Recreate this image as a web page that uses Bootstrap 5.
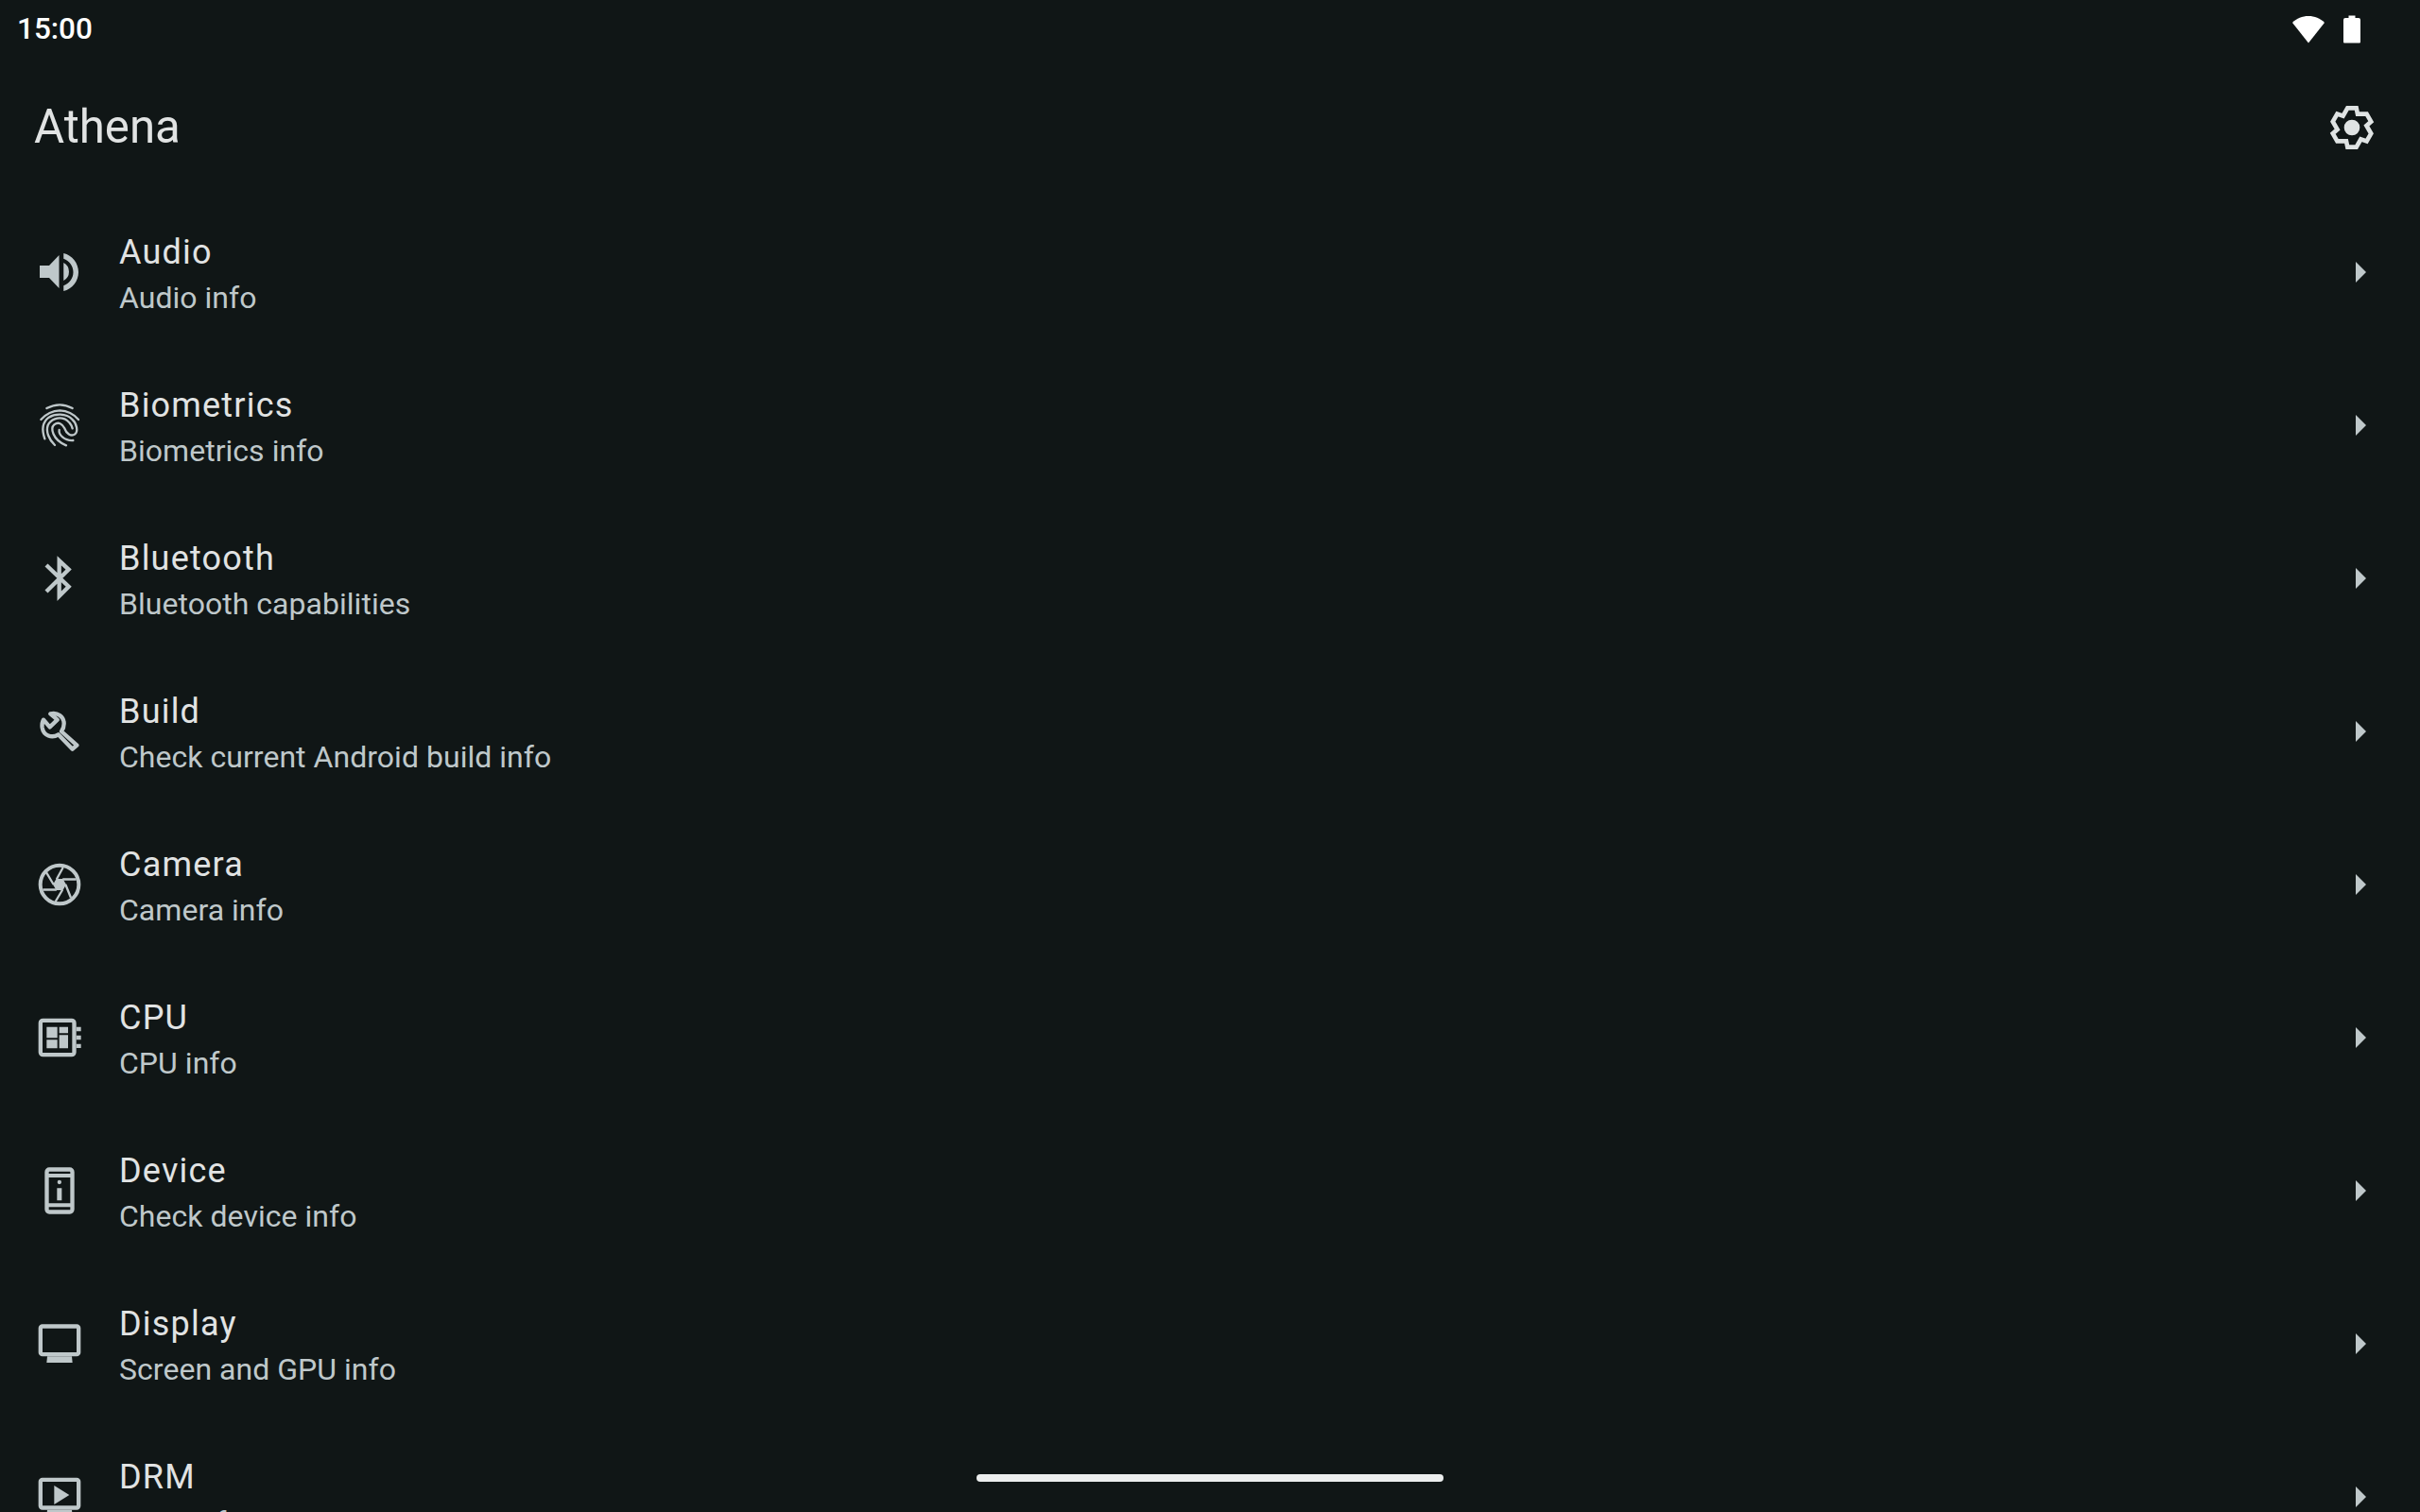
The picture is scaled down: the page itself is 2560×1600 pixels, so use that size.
<!DOCTYPE html>
<html lang="en">
<head>
  <meta charset="UTF-8">
  <title>Athena</title>
  <link href="https://cdn.jsdelivr.net/npm/bootstrap@5.3.0/dist/css/bootstrap.min.css" rel="stylesheet">
  <style>
    html, body { height: 100%; }
    body { background: #101616; font-family: Roboto, "Liberation Sans", sans-serif; overflow: hidden; }
    .screen { height: 1600px; overflow: hidden; }
    .status-row { height: 60px; padding: 2px 63px 0 18px; color: #fff; font-size: 31.5px; font-weight: 500; }
    .status-row svg { display: block; }
    .status-icons { gap: 20px; }
    .app-bar { height: 147px; padding: 3px 42px 0 36px; }
    .app-title { color: #e1e3e3; font-size: 49.200px; margin: 0; font-weight: 400; line-height: 1; }
    .info-row { height: 162px; padding: 0 32px 0 35px; }
    .row-icon { width: 60px; height: 60px; flex: none; color: #bfc8ca; margin-right: 31px; }
    .row-text { padding-top: 6px; }
    .row-title { color: #e1e3e3; font-size: 36px; letter-spacing: 1.200px; line-height: 48px; }
    .row-sub { color: #bfc8ca; font-size: 32px; letter-spacing: .03px; line-height: 48px; }
    .row-arrow { width: 60px; height: 60px; flex: none; color: #bfc8ca; }
    .home-pill { position: absolute; left: 1033px; top: 1560px; width: 494px; height: 8px; border-radius: 4px; background: #eceeee; }
  </style>
</head>
<body>
  <div class="screen position-relative">
    <div class="status-row d-flex align-items-center justify-content-between">
      <span>15:00</span>
      <span class="status-icons d-flex align-items-center">
        <svg width="34" height="30" viewBox="0 0 34 30"><path fill="#fff" d="M0 8C4.500 3.200 10.500 1 17 1s12.500 2.200 17 7L17 29.500z"/></svg>
        <svg width="18" height="30" viewBox="0 0 18 30"><path fill="#fff" d="M5.500 0.500h7v2.500H16a2 2 0 0 1 2 2V28.500a1 1 0 0 1-1 1H1a1 1 0 0 1-1-1V5a2 2 0 0 1 2-2h3.500z"/></svg>
      </span>
    </div>
    <div class="app-bar d-flex align-items-center justify-content-between">
      <h1 class="app-title">Athena</h1>
      <svg width="60" height="60" viewBox="-90 -90 180 180" fill="none" stroke="#dfe3e3" stroke-width="14" stroke-linejoin="miter"><path d="M-14-62H14L18-43 46.700-43.100 60.700-18.900 46.200-5.900 60.700 18.900 46.700 43.100 28.200 37.100 14 62H-14L-18 43-46.700 43.100-60.700 18.900-46.200 5.900-60.700-18.900-46.700-43.100-28.200-37.100z"/><circle r="25" fill="#dfe3e3" stroke="none"/></svg>
    </div>

    <div class="info-row d-flex align-items-center">
      <svg class="row-icon" viewBox="0 0 24 24" fill="currentColor"><path d="M2.800 9.200v5.200h4L11 18.800V4.800L6.800 9.200z"/><path d="M12.900 8v7.600a4.300 4.300 0 0 0 0-7.600z"/><path d="M12.900 4v2.300c2.400.9 4.100 3.100 4.100 5.700s-1.700 4.800-4.100 5.700V20c3.700-.9 6.300-4.200 6.300-8s-2.600-7.100-6.300-8z"/></svg>
      <div class="row-text flex-grow-1"><div class="row-title">Audio</div><div class="row-sub">Audio info</div></div>
      <svg class="row-arrow" viewBox="0 0 60 60" fill="currentColor"><path d="M24 19l11 11-11 11z"/></svg>
    </div>
    <div class="info-row d-flex align-items-center">
      <svg class="row-icon" viewBox="45 60 180 180" fill="none" stroke="currentColor" stroke-width="7" stroke-linecap="round"><path d="M88 96Q130 74 170 96"/><path d="M70 132Q95 104 130 103 165 104 189 132"/><path d="M82 193C72 165 75 140 95 125 115 112 150 112 168 130 185 145 188 170 178 178 165 188 150 175 145 160 138 145 125 138 112 148 100 158 105 195 150 214"/><path d="M114 213C95 195 85 170 92 150 100 132 125 122 145 130 160 138 167 150 170 160"/><path d="M172 198C145 200 125 180 128 165"/></svg>
      <div class="row-text flex-grow-1"><div class="row-title">Biometrics</div><div class="row-sub">Biometrics info</div></div>
      <svg class="row-arrow" viewBox="0 0 60 60" fill="currentColor"><path d="M24 19l11 11-11 11z"/></svg>
    </div>
    <div class="info-row d-flex align-items-center">
      <svg class="row-icon" viewBox="45 36 180 180" fill="none" stroke="currentColor" stroke-width="13"><path d="M87 84L158 152 128 182V70L158 98 87 168"/></svg>
      <div class="row-text flex-grow-1"><div class="row-title">Bluetooth</div><div class="row-sub">Bluetooth capabilities</div></div>
      <svg class="row-arrow" viewBox="0 0 60 60" fill="currentColor"><path d="M24 19l11 11-11 11z"/></svg>
    </div>
    <div class="info-row d-flex align-items-center">
      <svg class="row-icon" viewBox="45 72 180 180" fill="none" stroke="currentColor" stroke-width="13" stroke-linejoin="round"><path d="M100 106C122 100 143 115 143 137 143 146 140 155 135 162L184 206 170 218 125 172C105 184 78 176 74 150 73 142 74 132 78 125L98 148 122 125z"/></svg>
      <div class="row-text flex-grow-1"><div class="row-title">Build</div><div class="row-sub">Check current Android build info</div></div>
      <svg class="row-arrow" viewBox="0 0 60 60" fill="currentColor"><path d="M24 19l11 11-11 11z"/></svg>
    </div>
    <div class="info-row d-flex align-items-center">
      <svg class="row-icon" viewBox="45 558 180 180" fill="none" stroke="currentColor"><circle cx="129" cy="648" r="61" stroke-width="12"/><path fill="currentColor" stroke="none" d="M150 648L139.500 666H118.500L108 648 118.500 630H139.500z"/><path stroke-width="7" d="M138.500 631.500H182M148 648L165 690M138.500 664.500L116 702M119.500 664.500H76M110 648L86 608M119.500 631.500L140 594"/></svg>
      <div class="row-text flex-grow-1"><div class="row-title">Camera</div><div class="row-sub">Camera info</div></div>
      <svg class="row-arrow" viewBox="0 0 60 60" fill="currentColor"><path d="M24 19l11 11-11 11z"/></svg>
    </div>
    <div class="info-row d-flex align-items-center">
      <svg class="row-icon" viewBox="45 84 180 180" fill="currentColor"><rect x="68.500" y="119.500" width="107" height="109" rx="8" fill="none" stroke="currentColor" stroke-width="13"/><path d="M88 140h34v35H88zM128 140h28v20h-28zM88 181h34v27H88zM128 166h28v42h-28zM182 140h15v14h-15zM182 167h15v14h-15zM182 194h15v13h-15z"/></svg>
      <div class="row-text flex-grow-1"><div class="row-title">CPU</div><div class="row-sub">CPU info</div></div>
      <svg class="row-arrow" viewBox="0 0 60 60" fill="currentColor"><path d="M24 19l11 11-11 11z"/></svg>
    </div>
    <div class="info-row d-flex align-items-center">
      <svg class="row-icon" viewBox="45 570 180 180" fill="currentColor"><rect x="88.500" y="592.500" width="81" height="135" rx="8" fill="none" stroke="currentColor" stroke-width="13"/><path d="M88 606h82v12H88zM88 700h82v12H88zM121 652h15v39h-15z"/><circle cx="128.500" cy="633" r="6.500"/></svg>
      <div class="row-text flex-grow-1"><div class="row-title">Device</div><div class="row-sub">Check device info</div></div>
      <svg class="row-arrow" viewBox="0 0 60 60" fill="currentColor"><path d="M24 19l11 11-11 11z"/></svg>
    </div>
    <div class="info-row d-flex align-items-center">
      <svg class="row-icon" viewBox="105 96 180 180" fill="currentColor"><rect x="128.500" y="130.500" width="121" height="89" rx="6" fill="none" stroke="currentColor" stroke-width="13"/><path d="M150 226h78l2 20h-82z"/></svg>
      <div class="row-text flex-grow-1"><div class="row-title">Display</div><div class="row-sub">Screen and GPU info</div></div>
      <svg class="row-arrow" viewBox="0 0 60 60" fill="currentColor"><path d="M24 19l11 11-11 11z"/></svg>
    </div>
    <div class="info-row d-flex align-items-center">
      <svg class="row-icon" viewBox="105 582 180 180" fill="currentColor"><rect x="128.500" y="617.500" width="121" height="89" rx="6" fill="none" stroke="currentColor" stroke-width="13"/><path d="M150 713h78l2 20h-82zM172 636l48 30-48 30z"/></svg>
      <div class="row-text flex-grow-1"><div class="row-title">DRM</div><div class="row-sub">DRM info</div></div>
      <svg class="row-arrow" viewBox="0 0 60 60" fill="currentColor"><path d="M24 19l11 11-11 11z"/></svg>
    </div>
    <div class="home-pill"></div>
  </div>
</body>
</html>
